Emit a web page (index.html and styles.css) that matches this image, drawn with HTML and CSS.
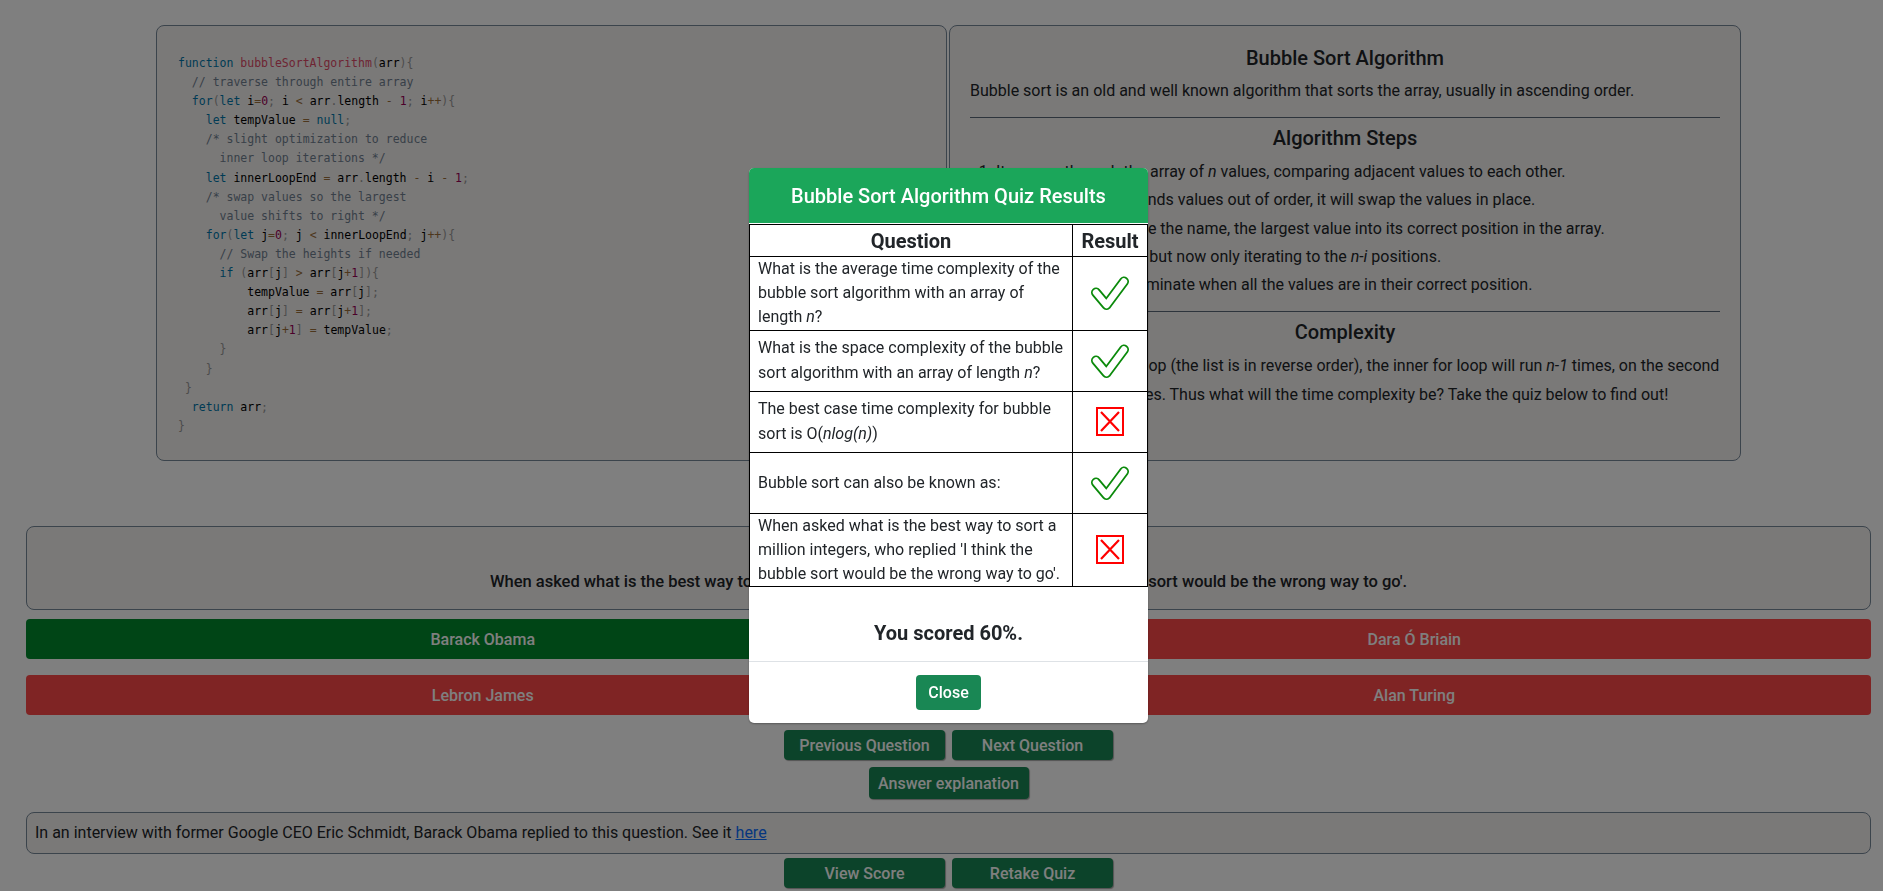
FILE: index.html
```html
<!DOCTYPE html>
<html lang="en">
<head>
<meta charset="utf-8">
<title>Bubble Sort Algorithm Quiz</title>
<link rel="stylesheet" href="styles.css">
</head>
<body>
<div class="page">
  <section class="top">
    <div class="code-box">
<pre class="code"><span class="k">function</span> <span class="f">bubbleSortAlgorithm</span><span class="p">(</span>arr<span class="p">){</span>
  <span class="c">// traverse through entire array</span>
  <span class="k">for</span><span class="p">(</span><span class="k">let</span> i<span class="o">=</span><span class="n">0</span><span class="p">;</span> i <span class="o">&lt;</span> arr<span class="p">.</span>length <span class="o">-</span> <span class="n">1</span><span class="p">;</span> i<span class="o">++</span><span class="p">){</span>
    <span class="k">let</span> tempValue <span class="o">=</span> <span class="k">null</span><span class="p">;</span>
    <span class="c">/* slight optimization to reduce
      inner loop iterations */</span>
    <span class="k">let</span> innerLoopEnd <span class="o">=</span> arr<span class="p">.</span>length <span class="o">-</span> i <span class="o">-</span> <span class="n">1</span><span class="p">;</span>
    <span class="c">/* swap values so the largest
      value shifts to right */</span>
    <span class="k">for</span><span class="p">(</span><span class="k">let</span> j<span class="o">=</span><span class="n">0</span><span class="p">;</span> j <span class="o">&lt;</span> innerLoopEnd<span class="p">;</span> j<span class="o">++</span><span class="p">){</span>
      <span class="c">// Swap the heights if needed</span>
      <span class="k">if</span> <span class="p">(</span>arr<span class="p">[</span>j<span class="p">]</span> <span class="o">&gt;</span> arr<span class="p">[</span>j<span class="o">+</span><span class="n">1</span><span class="p">]){</span>
          tempValue <span class="o">=</span> arr<span class="p">[</span>j<span class="p">];</span>
          arr<span class="p">[</span>j<span class="p">]</span> <span class="o">=</span> arr<span class="p">[</span>j<span class="o">+</span><span class="n">1</span><span class="p">];</span>
          arr<span class="p">[</span>j<span class="o">+</span><span class="n">1</span><span class="p">]</span> <span class="o">=</span> tempValue<span class="p">;</span>
      <span class="p">}</span>
    <span class="p">}</span>
 <span class="p">}</span>
  <span class="k">return</span> arr<span class="p">;</span>
<span class="p">}</span></pre>
    </div>
    <div class="info-box">
      <h2 class="info-title">Bubble Sort Algorithm</h2>
      <p class="info-text">Bubble sort is an old and well known algorithm that sorts the array, usually in ascending order.</p>
      <hr class="info-rule">
      <h2 class="info-title">Algorithm Steps</h2>
      <ol class="steps">
        <li>It passes through the array of <i>n</i> values, comparing adjacent values to each other.</li>
        <li>When the algorithm finds values out of order, it will swap the values in place.</li>
        <li>This will bubble, hence the name, the largest value into its correct position in the array.</li>
        <li>Repeat steps 1 and 2 but now only iterating to the <i>n-i</i> positions.</li>
        <li>The algorithm will terminate when all the values are in their correct position.</li>
      </ol>
      <hr class="info-rule">
      <h2 class="info-title">Complexity</h2>
      <p class="info-long">On the first pass of the loop (the list is in reverse order), the inner for loop will run <i>n-1</i> times, on the second pass, this will run <i>n-2</i> times. Thus what will the time complexity be? Take the quiz below to find out!</p>
    </div>
  </section>

  <section class="quiz">
    <div class="question-box">When asked what is the best way to sort a million integers, who replied 'I think the bubble sort would be the wrong way to go'.</div>
    <div class="answers">
      <button class="answer correct">Barack Obama</button>
      <button class="answer wrong">Dara Ó Briain</button>
      <button class="answer wrong">Lebron James</button>
      <button class="answer wrong">Alan Turing</button>
    </div>
    <div class="btn-row nav-row">
      <button class="btn">Previous Question</button>
      <button class="btn">Next Question</button>
    </div>
    <div class="btn-row explain-row">
      <button class="btn">Answer explanation</button>
    </div>
    <div class="explanation">In an interview with former Google CEO Eric Schmidt, Barack Obama replied to this question. See it <a href="#" class="link">here</a></div>
    <div class="btn-row bottom-row">
      <button class="btn">View Score</button>
      <button class="btn">Retake Quiz</button>
    </div>
  </section>
</div>

<div class="overlay"></div>

<div class="modal">
  <div class="modal-header">Bubble Sort Algorithm Quiz Results</div>
  <table class="results">
    <thead>
      <tr><th class="col-q">Question</th><th class="col-r">Result</th></tr>
    </thead>
    <tbody>
      <tr>
        <td class="q">What is the average time complexity of the bubble sort algorithm with an array of length <i>n</i>?</td>
        <td class="r"><svg class="icon" viewBox="0 0 40 40" width="40" height="40"><polyline points="6,19.5 16.5,32 34,8.5" fill="none" stroke="#0b8a0b" stroke-width="10" stroke-linecap="round" stroke-linejoin="round"/><polyline points="6,19.5 16.5,32 34,8.5" fill="none" stroke="#fff" stroke-width="6.4" stroke-linecap="round" stroke-linejoin="round"/></svg></td>
      </tr>
      <tr>
        <td class="q">What is the space complexity of the bubble sort algorithm with an array of length <i>n</i>?</td>
        <td class="r"><svg class="icon" viewBox="0 0 40 40" width="40" height="40"><polyline points="6,19.5 16.5,32 34,8.5" fill="none" stroke="#0b8a0b" stroke-width="10" stroke-linecap="round" stroke-linejoin="round"/><polyline points="6,19.5 16.5,32 34,8.5" fill="none" stroke="#fff" stroke-width="6.4" stroke-linecap="round" stroke-linejoin="round"/></svg></td>
      </tr>
      <tr>
        <td class="q">The best case time complexity for bubble sort is O(<i>nlog(n)</i>)</td>
        <td class="r"><svg class="icon" viewBox="0 0 40 40" width="40" height="40"><rect x="7" y="6" width="26" height="27" fill="#fff" stroke="#f00" stroke-width="2"/><path d="M11 10 L29 29 M29 10 L11 29" stroke="#f00" stroke-width="2.2" fill="none"/></svg></td>
      </tr>
      <tr>
        <td class="q">Bubble sort can also be known as:</td>
        <td class="r"><svg class="icon" viewBox="0 0 40 40" width="40" height="40"><polyline points="6,19.5 16.5,32 34,8.5" fill="none" stroke="#0b8a0b" stroke-width="10" stroke-linecap="round" stroke-linejoin="round"/><polyline points="6,19.5 16.5,32 34,8.5" fill="none" stroke="#fff" stroke-width="6.4" stroke-linecap="round" stroke-linejoin="round"/></svg></td>
      </tr>
      <tr>
        <td class="q">When asked what is the best way to sort a million integers, who replied 'I think the bubble sort would be the wrong way to go'.</td>
        <td class="r"><svg class="icon" viewBox="0 0 40 40" width="40" height="40"><rect x="7" y="6" width="26" height="27" fill="#fff" stroke="#f00" stroke-width="2"/><path d="M11 10 L29 29 M29 10 L11 29" stroke="#f00" stroke-width="2.2" fill="none"/></svg></td>
      </tr>
    </tbody>
  </table>
  <div class="score">You scored 60%.</div>
  <div class="modal-footer">
    <button class="close-btn">Close</button>
  </div>
</div>
</body>
</html>
```

FILE: styles.css
```css
html, body {
  margin: 0;
  padding: 0;
}

body {
  background: #ffffff;
  font-family: Roboto, "Noto Sans", "Liberation Sans", sans-serif;
  color: #212529;
  font-size: 16px;
  width: 1883px;
  height: 891px;
  overflow: hidden;
}

.page {
  padding-top: 25px;
}

/* ---------- top section ---------- */
.top {
  display: grid;
  grid-template-columns: 791px 792px;
  column-gap: 2px;
  margin-left: 156px;
  height: 436px;
}

.code-box,
.info-box,
.question-box,
.explanation {
  background: #f5f2f0;
  border: 1px solid #778899;
  border-radius: 8px;
  box-sizing: border-box;
}

.code-box {
  padding: 28px 20px 20px 21px;
}

.code {
  margin: 0;
  font-family: "DejaVu Sans Mono", "Liberation Mono", monospace;
  font-size: 11.5px;
  line-height: 19.1px;
  color: #000;
  white-space: pre;
}

.k { color: #0077aa; }
.f { color: #dd4a68; }
.p { color: #999999; }
.o { color: #9a6e3a; }
.n { color: #990055; }
.c { color: #708090; }

.info-box {
  padding: 20px 20px 0 20px;
}

.info-title {
  margin: 0;
  font-size: 20px;
  font-weight: 500;
  line-height: 24px;
  text-align: center;
}

.info-text {
  margin: 9px 0 14px;
  line-height: 24px;
}

.info-rule {
  margin: 0 0 8px 0;
  border: 0;
  border-top: 1px solid #5a6878;
}

.steps {
  margin: 8px 0 12px;
  padding-left: 26px;
  line-height: 28.3px;
}

.info-long {
  margin: 7px 0 0;
  line-height: 29px;
}

/* ---------- quiz section ---------- */
.quiz {
  margin-top: 65px;
  padding: 0 12px 0 26px;
}

.question-box {
  padding: 43px 10px 15px;
  line-height: 24px;
  font-size: 16.5px;
  font-weight: 500;
  text-align: center;
}

.answers {
  margin-top: 9px;
  display: grid;
  grid-template-columns: 1fr 1fr;
  column-gap: 18px;
  row-gap: 16px;
}

.answer {
  height: 40px;
  border: 0;
  border-radius: 4px;
  color: #fff;
  font-family: inherit;
  font-size: 16px;
  font-weight: 500;
}

.answer.correct { background: #008a2c; }
.answer.wrong { background: #fe4848; }

.btn-row {
  display: flex;
  justify-content: center;
  gap: 7px;
}

.nav-row { margin-top: 15px; }
.explain-row { margin-top: 7px; }
.bottom-row { margin-top: 4px; }

.btn {
  width: 161px;
  height: 30px;
  padding: 0;
  border: 0;
  border-radius: 4px;
  background: #198754;
  color: #fff;
  font-family: inherit;
  font-size: 16px;
  font-weight: 500;
  box-shadow: 1px 1px 1px rgba(0, 0, 0, 0.35);
}

.explain-row .btn { height: 32px; width: 160px; }

.explanation {
  margin-top: 13px;
  padding: 8px 8px;
  line-height: 24px;
}

.link {
  color: #0d6efd;
  text-decoration: underline;
}

/* ---------- overlay + modal ---------- */
.overlay {
  position: fixed;
  inset: 0;
  background: rgba(0, 0, 0, 0.5);
}

.modal {
  position: fixed;
  top: 168px;
  left: 749px;
  width: 399px;
  background: #fff;
  border-radius: 5px;
  overflow: hidden;
  box-shadow: 0 1px 2px rgba(0, 0, 0, 0.3);
}

.modal-header {
  background: #1ba65a;
  color: #fff;
  font-size: 20px;
  font-weight: 500;
  line-height: 24px;
  padding: 16px 0 15px;
  text-align: center;
  border-bottom: 1px solid #fff;
}

.results {
  width: 100%;
  border-collapse: collapse;
  table-layout: fixed;
  color: #212529;
}

.results th,
.results td {
  border: 1px solid #000;
}

.results th {
  font-size: 20px;
  font-weight: 700;
  line-height: 24px;
  padding: 4px 0 3px;
}

.col-r { width: 74px; }

.results td.q {
  padding: 0 3px 0 8px;
  line-height: 24.2px;
  font-size: 16px;
  vertical-align: middle;
}

.results td.r {
  padding: 0;
  height: 60px;
  text-align: center;
  vertical-align: middle;
}

.icon {
  display: block;
  margin: 0 auto;
}

.score {
  padding: 34px 0 16px;
  text-align: center;
  font-size: 20px;
  font-weight: 700;
  line-height: 24px;
}

.modal-footer {
  border-top: 1px solid #dee2e6;
  padding: 13px 0;
  display: flex;
  justify-content: center;
}

.close-btn {
  height: 35px;
  padding: 0 12px;
  border: 0;
  border-radius: 4px;
  background: #198754;
  color: #fff;
  font-family: inherit;
  font-size: 16px;
  font-weight: 500;
}
```
